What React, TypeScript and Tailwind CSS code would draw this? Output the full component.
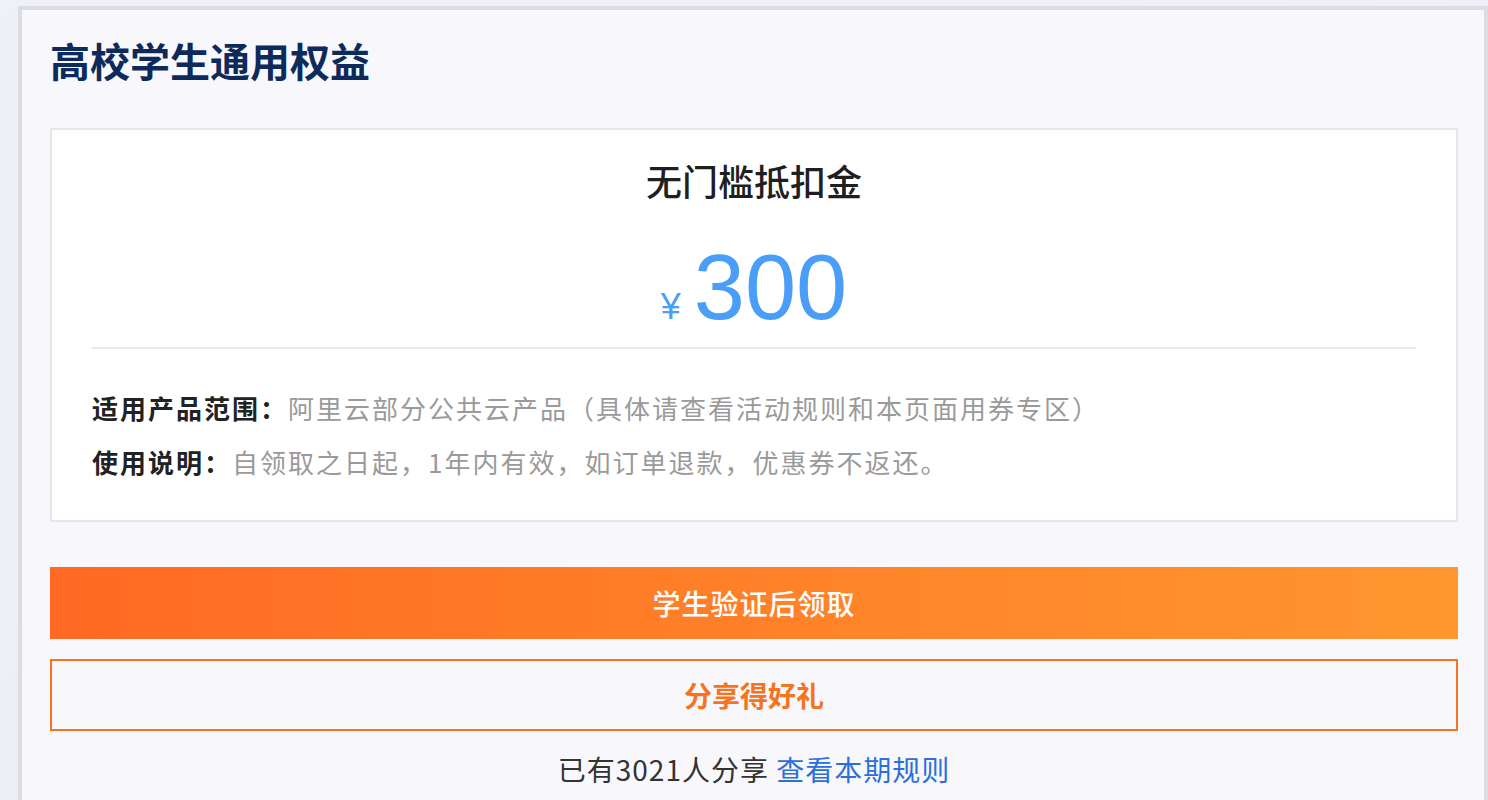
import React from 'react'

const cjk = { fontFamily: '"Noto Sans CJK SC", "Noto Sans", sans-serif' }

const InfoRow: React.FC<{ label: string; value: string }> = ({ label, value }) => (
  <div className="text-[26px] leading-[54px] tracking-[2px] whitespace-nowrap">
    <span className="font-semibold text-[#222222]">{label}</span>
    <span className="text-[#9a9a9a]">{value}</span>
  </div>
)

const App: React.FC = () => {
  return (
    <div
      className="min-h-screen w-full bg-gradient-to-br from-[#eef1f7] via-[#eceff6] to-[#dbe4ef] pl-[18px] pt-[6px] overflow-hidden"
      style={cjk}
    >
      <div className="min-h-[794px] border-[4px] border-b-0 border-[#dcdce2] bg-[#f8f8fc] pl-[28px] pr-[26px] pb-10">
        <h1 className="pt-[30px] text-[40px] leading-[40px] font-bold text-[#0e2a5a]">
          高校学生通用权益
        </h1>

        <div className="mt-[48px] border-2 border-[#e6e6e8] bg-white pb-[31px]">
          <div className="pt-[32px] text-center text-[36px] leading-[36px] font-medium text-[#1f1f1f]">
            无门槛抵扣金
          </div>
          <div
            className="mt-[44px] flex h-[90px] items-baseline justify-center text-[#4a9ef8]"
            style={{ fontFamily: '"Liberation Sans", Arial, sans-serif' }}
          >
            <span className="mr-[13px] text-[36px] leading-none">¥</span>
            <span className="text-[92px] leading-[90px]">300</span>
          </div>
          <div className="mx-[40px] mt-[15px] h-[2px] bg-[#e8e8ea]" />
          <div className="mx-[40px] mt-[32px]">
            <InfoRow label="适用产品范围：" value="阿里云部分公共云产品（具体请查看活动规则和本页面用券专区）" />
            <InfoRow label="使用说明：" value="自领取之日起，1年内有效，如订单退款，优惠券不返还。" />
          </div>
        </div>

        <button className="mt-[45px] flex h-[72px] w-full items-center justify-center bg-gradient-to-r from-[#ff6923] to-[#ff962e] text-[28px] tracking-[1px] font-medium text-white">
          学生验证后领取
        </button>
        <button className="mt-[20px] flex h-[72px] w-full items-center justify-center border-2 border-[#f47420] text-[28px] font-bold text-[#f5741f]">
          分享得好礼
        </button>
        <div className="mt-[18px] text-center text-[28px] leading-[40px] tracking-[1px] text-[#333333]">
          已有3021人分享 <span className="text-[#2b6fdb]">查看本期规则</span>
        </div>
      </div>
    </div>
  )
}

export default App
